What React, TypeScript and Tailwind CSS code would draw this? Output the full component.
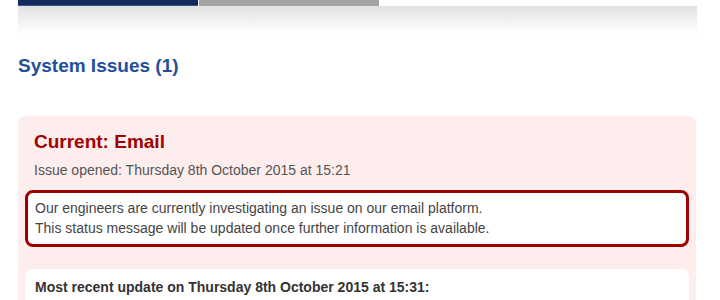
export default function App() {
  return (
    <div className="h-[300px] w-[720px] overflow-hidden bg-white font-['Liberation_Sans',Arial,sans-serif]">
      <div className="px-[18px]">
        {/* tabs */}
        <div className="flex h-[6px] gap-px">
          <div className="w-[180px] bg-[#102b5c] shadow-[inset_0_-1px_0_#3a5482]" />
          <div className="w-[180px] bg-[#a3a3a3]" />
        </div>
        {/* shaded bar */}
        <div className="h-[27px] w-[679px] bg-gradient-to-b from-[#e2e2e2] to-white" />

        <h1 className="mt-[21px] text-[19px] leading-[24px] font-bold text-[#22509c]">
          System Issues (1)
        </h1>

        <div className="mt-[38px] w-[678px] rounded-[8px] bg-[#fdeded] px-[7px] pt-[14px]">
          <h2 className="px-[9px] text-[19px] leading-[24px] font-bold text-[#a30000]">
            Current: Email
          </h2>
          <p className="mt-[6px] px-[9px] text-[14px] leading-[20px] text-[#555]">
            Issue opened: Thursday 8th October 2015 at 15:21
          </p>

          <div className="mt-[10px] rounded-[8px] border-[3px] border-[#9e0000] bg-white px-[7px] pt-[5px] pb-[6px] text-[14px] leading-[20px] text-[#444]">
            <p>Our engineers are currently investigating an issue on our email platform.</p>
            <p>This status message will be updated once further information is available.</p>
          </div>

          <div className="mt-[22px] rounded-[8px] bg-white px-[10px] pt-[8px] pb-[12px] text-[14px] leading-[20px] font-bold text-[#333]">
            Most recent update on Thursday 8th October 2015 at 15:31:
          </div>
        </div>
      </div>
    </div>
  );
}
